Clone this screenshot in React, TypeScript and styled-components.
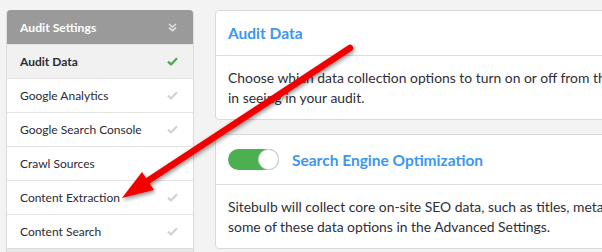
import React from "react";
import styled, { createGlobalStyle } from "styled-components";

const Global = createGlobalStyle`
  html, body { margin: 0; padding: 0; background: #f3f3f3; overflow: hidden; }
  body { font-family: Lato, "Open Sans", sans-serif; color: #333; }
`;

const Page = styled.div`
  position: relative;
  width: 602px;
  height: 252px;
  overflow: hidden;
  display: flex;
  align-items: flex-start;
  gap: 21px;
  padding: 10px 0 0 6px;
  box-sizing: border-box;
`;

const Sidebar = styled.div`
  width: 188px;
  flex: none;
  display: flex;
  flex-direction: column;
`;

const Menu = styled.div`
  background: #fff;
  border: 1px solid #dcdcdc;
  border-top: none;
  border-radius: 4px 4px 0 0;
  overflow: hidden;
`;

const MenuHeader = styled.div`
  height: 34px;
  background: #9a9a9a;
  display: flex;
  align-items: center;
  justify-content: space-between;
  padding: 0 16px 0 13px;
  color: #fff;
  font-weight: 700;
  font-size: 12.2px;
`;

const MenuItem = styled.div<{ $active?: boolean }>`
  height: 33px;
  border-top: 1px solid #e3e3e3;
  background: ${(p) => (p.$active ? "#f1f1f1" : "#fff")};
  display: flex;
  align-items: center;
  justify-content: space-between;
  padding: 0 15px 0 13px;
  font-size: 12px;
  font-weight: ${(p) => (p.$active ? 700 : 400)};
  color: #2b2b35;
`;

const NextSection = styled.div`
  height: 10px;
  background: #e6e6e6;
  border-left: 1px solid #dcdcdc;
  border-right: 1px solid #dcdcdc;
`;

const Main = styled.div`
  display: flex;
  flex-direction: column;
  gap: 14px;
  width: 440px;
  flex: none;
`;

const Card = styled.div`
  background: #fff;
  border: 1px solid #d9d9d9;
  border-radius: 4px;
`;

const CardHeader = styled.div<{ $h: number }>`
  height: ${(p) => p.$h}px;
  display: flex;
  align-items: center;
  gap: 13px;
  padding: 0 12px;
  border-bottom: 1px solid #dcdcdc;
`;

const CardTitle = styled.div`
  color: #3c97ef;
  font-size: 15.5px;
  font-weight: 700;
`;

const CardBody = styled.div`
  padding: 12px 12px 11px;
  font-size: 13.9px;
  line-height: 20px;
  color: #2e2e38;
  white-space: nowrap;
`;

const Toggle = styled.div`
  position: relative;
  width: 51px;
  height: 21px;
  border-radius: 11px;
  background: #4caf50;
  flex: none;
`;

const Knob = styled.div`
  position: absolute;
  right: 0;
  top: 0;
  width: 19px;
  height: 19px;
  border-radius: 50%;
  background: #fff;
  border: 1px solid #d6d6d6;
`;

const ArrowLayer = styled.svg`
  position: absolute;
  left: 0;
  top: 0;
  pointer-events: none;
`;

const Check = ({ color }: { color: string }) => (
  <svg width="11" height="9" viewBox="0 0 11 9">
    <path d="M1 4.6 L4 7.4 L10 1.2" fill="none" stroke={color} strokeWidth="2.2" strokeLinejoin="round" />
  </svg>
);

const Chevrons = () => (
  <svg width="9" height="9" viewBox="0 0 9 9">
    <path d="M1 1 L4.5 4 L8 1 M1 4.6 L4.5 7.6 L8 4.6" fill="none" stroke="#e2e2e2" strokeWidth="1.6" />
  </svg>
);

const items: { label: string; active?: boolean; done?: boolean }[] = [
  { label: "Audit Data", active: true, done: true },
  { label: "Google Analytics" },
  { label: "Google Search Console" },
  { label: "Crawl Sources", done: true },
  { label: "Content Extraction" },
  { label: "Content Search" },
];

export default function App() {
  return (
    <>
      <Global />
      <Page>
        <Sidebar>
          <Menu>
            <MenuHeader>
              Audit Settings
              <Chevrons />
            </MenuHeader>
            {items.map((it) => (
              <MenuItem key={it.label} $active={it.active}>
                {it.label}
                <Check color={it.done ? "#4aa84e" : "#d2d2d2"} />
              </MenuItem>
            ))}
          </Menu>
          <NextSection />
        </Sidebar>
        <Main>
          <Card>
            <CardHeader $h={44}>
              <CardTitle>Audit Data</CardTitle>
            </CardHeader>
            <CardBody>
              Choose which data collection options to turn on or off from the options below, based on what you are interested
              <br />
              in seeing in your audit.
            </CardBody>
          </Card>
          <Card>
            <CardHeader $h={49}>
              <Toggle>
                <Knob />
              </Toggle>
              <CardTitle>Search Engine Optimization</CardTitle>
            </CardHeader>
            <CardBody>
              Sitebulb will collect core on-site SEO data, such as titles, meta descriptions and headings. You can turn off
              <br />
              some of these data options in the Advanced Settings.
            </CardBody>
          </Card>
        </Main>
        <ArrowLayer width="602" height="252" viewBox="0 0 602 252">
          <defs>
            <filter id="sh" x="-20%" y="-20%" width="140%" height="140%">
              <feDropShadow dx="1" dy="2" stdDeviation="2" floodColor="#000" floodOpacity="0.45" />
            </filter>
          </defs>
          <g filter="url(#sh)">
            <line x1="350" y1="48" x2="140" y2="186" stroke="#f20000" strokeWidth="6.5" strokeLinecap="round" />
            <polygon points="122,198 142,172 154,190" fill="#f20000" />
          </g>
        </ArrowLayer>
      </Page>
    </>
  );
}
